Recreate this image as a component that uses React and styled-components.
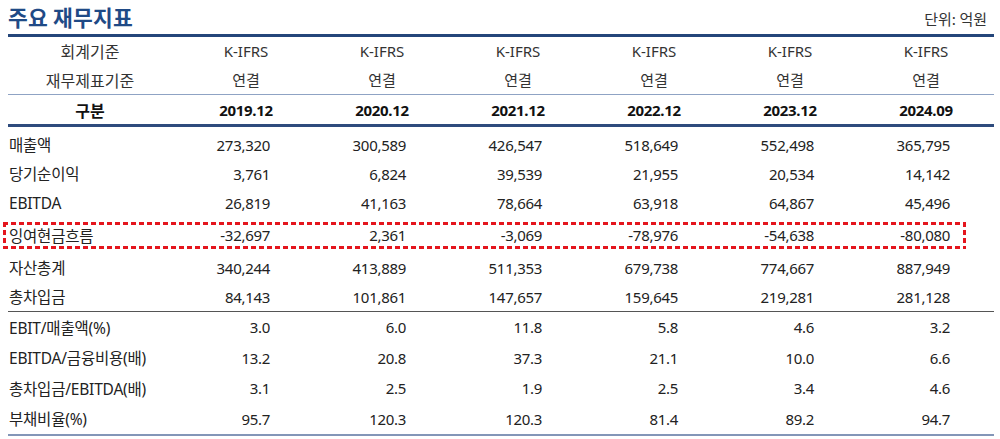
import React from "react";
import styled, { createGlobalStyle } from "styled-components";

const GlobalStyle = createGlobalStyle`
	html, body {
		margin: 0;
		padding: 0;
		background: #ffffff;
	}
	body {
		font-family: "Noto Sans", "Noto Sans CJK KR", sans-serif;
		color: #222222;
	}
`;

const Page = styled.div`
	width: 1000px;
	padding: 0 6px 0 8px;
	box-sizing: border-box;
`;

const TitleBar = styled.div`
	height: 34px;
	display: flex;
	align-items: center;
	justify-content: space-between;
	padding-right: 7px;
`;

const Title = styled.h1`
	margin: 0;
	font-family: "Noto Sans CJK KR", sans-serif;
	font-size: 21.5px;
	font-weight: 700;
	color: #1f4a86;
	letter-spacing: 0.2px;
	line-height: 1;
`;

const Unit = styled.span`
	font-family: "Noto Sans CJK KR", sans-serif;
	font-size: 15px;
	color: #333333;
	margin-top: 2px;
`;

const Table = styled.div`
	width: 986px;
	border-top: 3px solid #24467a;
	border-bottom: 2px solid #8396b8;
`;

const Section = styled.div`
	border-bottom: ${(p) => p.$line || "none"};
	padding-top: ${(p) => p.$padTop || 0}px;
`;

const Row = styled.div`
	position: relative;
	display: grid;
	grid-template-columns: 170px repeat(6, 1fr);
	align-items: center;
	height: ${(p) => p.$h}px;
`;

const HeadLabel = styled.div`
	text-align: center;
	font-family: "Noto Sans CJK KR", sans-serif;
	font-size: 16px;
	font-weight: ${(p) => (p.$bold ? 700 : 400)};
	color: ${(p) => (p.$bold ? "#111" : "#333")};
	padding-right: 6px;
`;

const HeadCell = styled.div`
	text-align: center;
	font-family: "Noto Sans", "Noto Sans CJK KR", sans-serif;
	font-size: 15px;
	font-weight: ${(p) => (p.$bold ? 700 : 400)};
	color: ${(p) => (p.$bold ? "#111" : "#333")};
	letter-spacing: ${(p) => (p.$bold ? "-0.3px" : "0")};
`;

const Label = styled.div`
	padding-left: 1px;
	font-family: "Noto Sans", "Noto Sans CJK KR", sans-serif;
	font-size: 15.5px;
	color: #222;
	white-space: nowrap;
	letter-spacing: -0.2px;
`;

const Value = styled.div`
	text-align: right;
	padding-right: 44px;
	font-family: "Noto Sans", sans-serif;
	font-size: 15px;
	color: #222;
	letter-spacing: -0.3px;
`;

const Highlight = styled.div`
	position: absolute;
	left: -5px;
	right: 28px;
	top: 5px;
	bottom: 4px;
	pointer-events: none;
	background:
		repeating-linear-gradient(90deg, #e4151d 0 5px, transparent 5px 8px) top left / 100% 3px no-repeat,
		repeating-linear-gradient(90deg, #e4151d 0 5px, transparent 5px 8px) bottom left / 100% 3px no-repeat,
		repeating-linear-gradient(180deg, #e4151d 0 5px, transparent 5px 8px) top left / 3px 100% no-repeat,
		repeating-linear-gradient(180deg, #e4151d 0 5px, transparent 5px 8px) top right / 3px 100% no-repeat;
`;

const periods = ["2019.12", "2020.12", "2021.12", "2022.12", "2023.12", "2024.09"];

const amounts = [
	{ label: "매출액", values: ["273,320", "300,589", "426,547", "518,649", "552,498", "365,795"] },
	{ label: "당기순이익", values: ["3,761", "6,824", "39,539", "21,955", "20,534", "14,142"] },
	{ label: "EBITDA", values: ["26,819", "41,163", "78,664", "63,918", "64,867", "45,496"] },
	{ label: "잉여현금흐름", values: ["-32,697", "2,361", "-3,069", "-78,976", "-54,638", "-80,080"], mark: true },
	{ label: "자산총계", values: ["340,244", "413,889", "511,353", "679,738", "774,667", "887,949"] },
	{ label: "총차입금", values: ["84,143", "101,861", "147,657", "159,645", "219,281", "281,128"] },
];

const ratios = [
	{ label: "EBIT/매출액(%)", values: ["3.0", "6.0", "11.8", "5.8", "4.6", "3.2"] },
	{ label: "EBITDA/금융비용(배)", values: ["13.2", "20.8", "37.3", "21.1", "10.0", "6.6"] },
	{ label: "총차입금/EBITDA(배)", values: ["3.1", "2.5", "1.9", "2.5", "3.4", "4.6"] },
	{ label: "부채비율(%)", values: ["95.7", "120.3", "120.3", "81.4", "89.2", "94.7"] },
];

function DataRow({ row, h }) {
	return (
		<Row $h={row.mark ? 36 : h}>
			<Label>{row.label}</Label>
			{row.values.map((v, i) => (
				<Value key={i}>{v}</Value>
			))}
			{row.mark && <Highlight />}
		</Row>
	);
}

export default function App() {
	return (
		<Page>
			<GlobalStyle />
			<TitleBar>
				<Title>주요 재무지표</Title>
				<Unit>단위: 억원</Unit>
			</TitleBar>
			<Table>
				<Section $line="1.5px solid #8fa3c4">
					<Row $h={28}>
						<HeadLabel>회계기준</HeadLabel>
						{periods.map((p) => (
							<HeadCell key={p}>K-IFRS</HeadCell>
						))}
					</Row>
					<Row $h={29}>
						<HeadLabel>재무제표기준</HeadLabel>
						{periods.map((p) => (
							<HeadCell key={p}>연결</HeadCell>
						))}
					</Row>
				</Section>
				<Section $line="3px solid #2e4b7d">
					<Row $h={29}>
						<HeadLabel $bold>구분</HeadLabel>
						{periods.map((p) => (
							<HeadCell key={p} $bold>{p}</HeadCell>
						))}
					</Row>
				</Section>
				<Section $line="1.5px solid #555" $padTop={3}>
					{amounts.map((r) => (
						<DataRow key={r.label} row={r} h={29} />
					))}
				</Section>
				<Section>
					{ratios.map((r) => (
						<DataRow key={r.label} row={r} h={30.5} />
					))}
				</Section>
			</Table>
		</Page>
	);
}
